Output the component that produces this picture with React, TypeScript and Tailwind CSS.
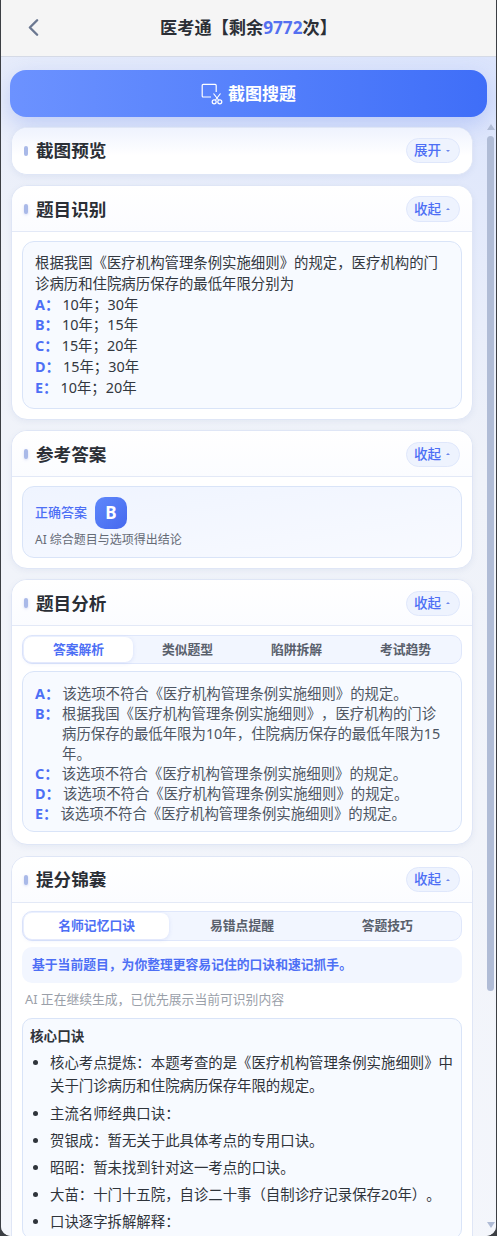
import { ChevronLeft } from "lucide-react";

const font = { fontFamily: '"Noto Sans", "Noto Sans CJK SC", sans-serif' };

function Pill({ label, open }: { label: string; open?: boolean }) {
  return (
    <button className="flex h-[25.5px] w-[54px] items-center rounded-full border border-[#dfe7fb] bg-[#eef3fe] pl-[7px] text-[13.6px] font-medium text-[#4d6ff5]">
      <span>{label}</span>
      <span
        className={`ml-[5px] h-0 w-0 border-x-[2.5px] border-x-transparent ${
          open
            ? "border-b-[2px] border-b-[#6d86ec]"
            : "border-t-[2px] border-t-[#6d86ec]"
        }`}
      />
    </button>
  );
}

function CardHeader({ title, action, open }: { title: string; action: string; open?: boolean }) {
  return (
    <div className="flex h-[46px] items-center justify-between border-b border-[#e3e9f7] bg-gradient-to-b from-white to-[#fbfcff] px-3 pt-[1px]">
      <div className="flex items-center gap-2">
        <span className="h-[10px] w-1 rounded-full bg-[#a9b9e8] shadow-[0_1px_3px_rgba(120,140,220,0.3)]" />
        <h2 className="mt-[1px] text-[17.6px] font-bold leading-none text-[#2b2f36]">{title}</h2>
      </div>
      <Pill label={action} open={open} />
    </div>
  );
}

function Tabs({ items }: { items: string[] }) {
  return (
    <div className="flex h-[29.5px] shrink-0 rounded-[10px] border border-[#dfe7fb] bg-[#f2f6ff] p-[1px]">
      {items.map((item, i) => (
        <div
          key={item}
          className={`flex flex-1 items-center justify-center rounded-[8px] text-[12.8px] font-bold ${
            i === 0 ? "bg-white text-[#4d6ff5] shadow-[0_1px_4px_rgba(80,110,220,0.15)]" : "text-[#59606c]"
          }`}
        >
          {item}
        </div>
      ))}
    </div>
  );
}

function Row({ k, text }: { k: string; text: string }) {
  return (
    <div className="flex gap-[3px]">
      <span className="shrink-0 font-bold text-[#4d6ff5]">{k}：</span>
      <span>{text}</span>
    </div>
  );
}

const tips = [
  "核心考点提炼：本题考查的是《医疗机构管理条例实施细则》中关于门诊病历和住院病历保存年限的规定。",
  "主流名师经典口诀：",
  "贺银成：暂无关于此具体考点的专用口诀。",
  "昭昭：暂未找到针对这一考点的口诀。",
  "大苗：十门十五院，自诊二十事（自制诊疗记录保存20年）。",
  "口诀逐字拆解解释：",
];

const cardClass = "shrink-0 overflow-hidden rounded-[16px] border border-[#dfe6f6] bg-white shadow-[0_2px_6px_rgba(90,110,170,0.08)]";

export default function App() {
  return (
    <div style={font} className="h-[1236px] w-[497px] overflow-hidden bg-[#3c3f44] [text-spacing-trim:space-all]">
      <div className="mx-[1px] flex h-full flex-col overflow-hidden rounded-b-[10px] bg-[#f3f6fd]">
        <header className="relative flex h-[57px] shrink-0 items-center justify-center border-b border-[#d5dae6] bg-[#f5f5f5]">
          <ChevronLeft className="absolute left-[18px] top-[13px] h-[29px] w-[29px] text-[#6b7891]" strokeWidth={2} />
          <h1 className="text-[17.2px] font-bold text-[#2b2f36]">
            医考通【剩余<span className="text-[#5470f0]">9772</span>次】
          </h1>
        </header>

        <div className="flex min-h-0 flex-1 flex-col bg-[linear-gradient(205deg,#dbe4fc_0%,#eff2f9_30%,#f5f7fc_100%)] pt-[13px]">
          <button className="mx-[9px] flex h-[47px] shrink-0 items-center justify-center gap-[5px] rounded-[16px] bg-gradient-to-r from-[#6c92ff] to-[#3f6ef8] pt-[1px] text-[17px] font-bold text-white shadow-[0_8px_22px_rgba(70,110,240,0.25)]">
            <svg width="22" height="22" viewBox="0 0 22 22" fill="none" stroke="currentColor" strokeWidth="1.2">
              <path d="M10 14H2.2a1 1 0 0 1-1-1V2.4a1 1 0 0 1 1-1h12a1 1 0 0 1 1 1V9" />
              <path d="M12.5 10.5l5 6.5M19.5 10.5l-5 6.5" />
              <circle cx="13.2" cy="18.8" r="2" />
              <circle cx="18.8" cy="18.8" r="2" />
            </svg>
            截图搜题
          </button>

          <div className="flex min-h-0 flex-1 pt-[9.7px]">
            <main className="ml-[10px] flex w-[462px] shrink-0 flex-col gap-[10.5px]">
              <section className={cardClass}>
                <div className="bg-gradient-to-b from-[#eff3fe] to-white to-60%">
                  <div className="flex h-[46px] items-center justify-between px-3">
                    <div className="flex items-center gap-2">
                      <span className="h-[10px] w-1 rounded-full bg-[#a9b9e8]" />
                      <h2 className="text-[17.6px] font-bold leading-none text-[#2b2f36]">截图预览</h2>
                    </div>
                    <Pill label="展开" />
                  </div>
                </div>
              </section>

              <section className={cardClass}>
                <CardHeader title="题目识别" action="收起" open />
                <div className="px-[10px] pb-[10.3px] pt-[9px]">
                  <div className="h-[167.4px] rounded-[12px] border border-[#d9e4f8] bg-[#f7faff] px-3 pt-[10.5px] text-[14.4px] leading-[20.9px] text-[#333840]">
                    <p>根据我国《医疗机构管理条例实施细则》的规定，医疗机构的门诊病历和住院病历保存的最低年限分别为</p>
                    <Row k="A" text="10年；30年" />
                    <Row k="B" text="10年；15年" />
                    <Row k="C" text="15年；20年" />
                    <Row k="D" text="15年；30年" />
                    <Row k="E" text="10年；20年" />
                  </div>
                </div>
              </section>

              <section className={cardClass}>
                <CardHeader title="参考答案" action="收起" open />
                <div className="px-[10px] pb-[9.5px] pt-[8.7px]">
                  <div className="h-[72.2px] rounded-[12px] border border-[#d9e4f8] bg-gradient-to-br from-[#eff4ff] to-[#f8faff] px-3 pt-[10px]">
                    <div className="flex items-center gap-2">
                      <span className="text-[13px] font-medium text-[#4d6ff5]">正确答案</span>
                      <span className="flex h-8 w-8 items-center justify-center rounded-[10px] bg-gradient-to-br from-[#5f88fb] to-[#4668ee] text-[17px] font-bold text-white">B</span>
                    </div>
                    <p className="mt-[2px] text-[12px] leading-[18px] text-[#656b76]">AI 综合题目与选项得出结论</p>
                  </div>
                </div>
              </section>

              <section className={cardClass}>
                <CardHeader title="题目分析" action="收起" open />
                <div className="flex flex-col gap-[7px] px-[10px] pb-[11.7px] pt-[8.7px]">
                  <Tabs items={["答案解析", "类似题型", "陷阱拆解", "考试趋势"]} />
                  <div className="h-[161px] rounded-[12px] border border-[#d9e4f8] bg-[#f7faff] px-3 pt-[11.5px] text-[14.4px] leading-[20px] text-[#4e5663]">
                    <Row k="A" text="该选项不符合《医疗机构管理条例实施细则》的规定。" />
                    <Row k="B" text="根据我国《医疗机构管理条例实施细则》，医疗机构的门诊病历保存的最低年限为10年，住院病历保存的最低年限为15年。" />
                    <Row k="C" text="该选项不符合《医疗机构管理条例实施细则》的规定。" />
                    <Row k="D" text="该选项不符合《医疗机构管理条例实施细则》的规定。" />
                    <Row k="E" text="该选项不符合《医疗机构管理条例实施细则》的规定。" />
                  </div>
                </div>
              </section>

              <section className="shrink-0 overflow-hidden rounded-t-[16px] border border-[#dfe6f6] bg-white">
                <CardHeader title="提分锦囊" action="收起" open />
                <div className="px-[10px] pt-[8.7px]">
                  <Tabs items={["名师记忆口诀", "易错点提醒", "答题技巧"]} />
                  <div className="mt-[6.3px] flex h-[35.7px] items-center rounded-[10px] bg-[#f2f6ff] px-[10px] text-[12.8px] font-semibold text-[#4d6ff5]">
                    基于当前题目，为你整理更容易记住的口诀和速记抓手。
                  </div>
                  <p className="mt-[6.3px] pl-[3px] text-[12.8px] leading-[20px] text-[#9aa0a9]">AI 正在继续生成，已优先展示当前可识别内容</p>
                  <div className="mt-[9.3px] rounded-[10px] border border-[#d9e4f8] bg-[#f7faff] px-[7px] pt-[7px] text-[#2f343b]">
                    <p className="text-[13.6px] font-bold leading-5">核心口诀</p>
                    <ul className="mt-[5px] list-disc pl-5 text-[14.4px] leading-[23px]">
                      {tips.map((tip) => (
                        <li key={tip} className="mb-[4.2px]">{tip}</li>
                      ))}
                    </ul>
                  </div>
                </div>
              </section>
            </main>

            <div className="-mt-[3px] ml-[13.5px] flex w-2 flex-col items-center">
              <span className="h-0 w-0 border-x-[4px] border-b-[6px] border-x-transparent border-b-[#b0bcd6]" />
              <span className="mt-[6.7px] h-[855px] w-[7px] shrink-0 rounded-full bg-[#b0bcd6]" />
              <span className="mb-[8px] mt-auto h-0 w-0 border-x-[4px] border-t-[6px] border-x-transparent border-t-[#b0bcd6]" />
            </div>
          </div>
        </div>
      </div>
    </div>
  );
}
